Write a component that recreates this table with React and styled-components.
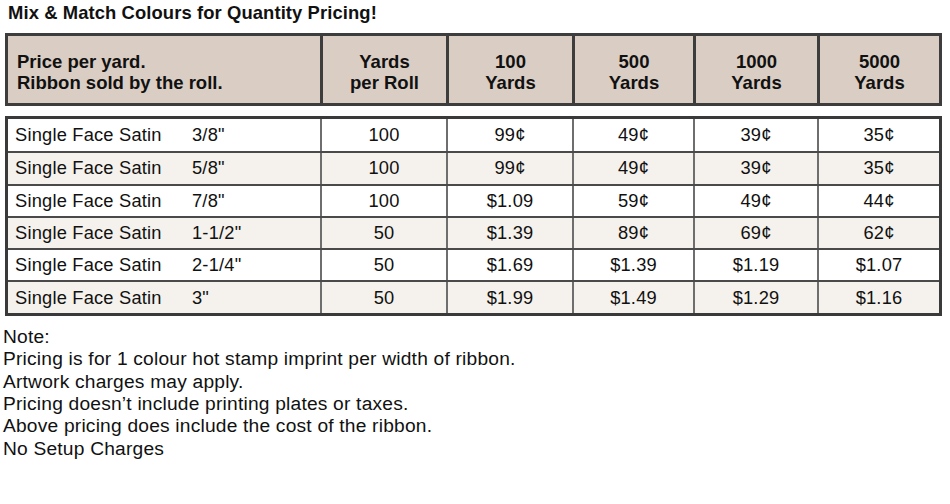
import React from 'react';
import styled, { createGlobalStyle } from 'styled-components';

const GlobalStyle = createGlobalStyle`
    html, body {
        margin: 0;
        padding: 0;
        background: #ffffff;
    }
    body {
        font-family: "Liberation Sans", Arial, sans-serif;
        color: #111111;
    }
`;

const COLUMNS = '312px 126px 126px 121px 124px 1fr';

const Page = styled.div`
    width: 950px;
    padding-top: 2px;
`;

const Title = styled.h1`
    margin: 0 0 9px 8px;
    font-size: 18.4px;
    line-height: 22px;
    font-weight: bold;
    letter-spacing: 0.1px;
`;

const HeaderTable = styled.div`
    margin-left: 5px;
    width: 937px;
    box-sizing: border-box;
    display: grid;
    grid-template-columns: ${COLUMNS};
    height: 73px;
    border: 3px solid #3d3d3d;
    background-color: #dacdc3;
`;

const HeaderCell = styled.div`
    display: flex;
    align-items: center;
    justify-content: ${props => (props.$left ? 'flex-start' : 'center')};
    text-align: ${props => (props.$left ? 'left' : 'center')};
    padding: 5px 0 0 ${props => (props.$left ? '9px' : '0')};
    border-left: ${props => (props.$left ? 'none' : '3px solid #3d3d3d')};
    font-size: 18.5px;
    line-height: 21px;
    font-weight: bold;
`;

const BodyTable = styled.div`
    margin: 10px 0 0 5px;
    width: 937px;
    box-sizing: border-box;
    border: 3px solid #3a3a3a;
`;

const Row = styled.div`
    display: grid;
    grid-template-columns: ${COLUMNS};
    height: 32.3px;
    box-sizing: border-box;
    border-top: ${props => (props.$first ? 'none' : '2px solid #4a4a4a')};
    background-color: ${props => (props.$shaded ? '#f5f1ec' : '#ffffff')};
`;

const NameCell = styled.div`
    display: flex;
    align-items: center;
    padding-left: 7px;
    font-size: 18.3px;
    letter-spacing: 0.2px;
`;

const Name = styled.span`
    width: 177px;
`;

const Cell = styled.div`
    display: flex;
    align-items: center;
    justify-content: center;
    border-left: 2px solid #6e6e6e;
    font-size: 18.3px;
    letter-spacing: 0.2px;
`;

const Notes = styled.div`
    margin: 10px 0 0 3px;
    font-size: 19.2px;
    line-height: 22.4px;
    letter-spacing: 0.2px;
`;

const headers = [
    ['Yards', 'per Roll'],
    ['100', 'Yards'],
    ['500', 'Yards'],
    ['1000', 'Yards'],
    ['5000', 'Yards'],
];

const rows = [
    { size: '3/8"', prices: ['100', '99¢', '49¢', '39¢', '35¢'] },
    { size: '5/8"', prices: ['100', '99¢', '49¢', '39¢', '35¢'] },
    { size: '7/8"', prices: ['100', '$1.09', '59¢', '49¢', '44¢'] },
    { size: '1-1/2"', prices: ['50', '$1.39', '89¢', '69¢', '62¢'] },
    { size: '2-1/4"', prices: ['50', '$1.69', '$1.39', '$1.19', '$1.07'] },
    { size: '3"', prices: ['50', '$1.99', '$1.49', '$1.29', '$1.16'] },
];

const notes = [
    'Note:',
    'Pricing is for 1 colour hot stamp imprint per width of ribbon.',
    'Artwork charges may apply.',
    'Pricing doesn\u2019t include printing plates or taxes.',
    'Above pricing does include the cost of the ribbon.',
    'No Setup Charges',
];

export default function App() {
    return (
        <Page>
            <GlobalStyle />
            <Title>Mix &amp; Match Colours for Quantity Pricing!</Title>
            <HeaderTable>
                <HeaderCell $left>
                    Price per yard.<br />Ribbon sold by the roll.
                </HeaderCell>
                {headers.map(([a, b]) => (
                    <HeaderCell key={a}>
                        {a}<br />{b}
                    </HeaderCell>
                ))}
            </HeaderTable>
            <BodyTable>
                {rows.map((r, i) => (
                    <Row key={r.size} $first={i === 0} $shaded={i % 2 === 1}>
                        <NameCell>
                            <Name>Single Face Satin</Name>
                            {r.size}
                        </NameCell>
                        {r.prices.map((p, j) => (
                            <Cell key={j}>{p}</Cell>
                        ))}
                    </Row>
                ))}
            </BodyTable>
            <Notes>
                {notes.map(n => (
                    <div key={n}>{n}</div>
                ))}
            </Notes>
        </Page>
    );
}
